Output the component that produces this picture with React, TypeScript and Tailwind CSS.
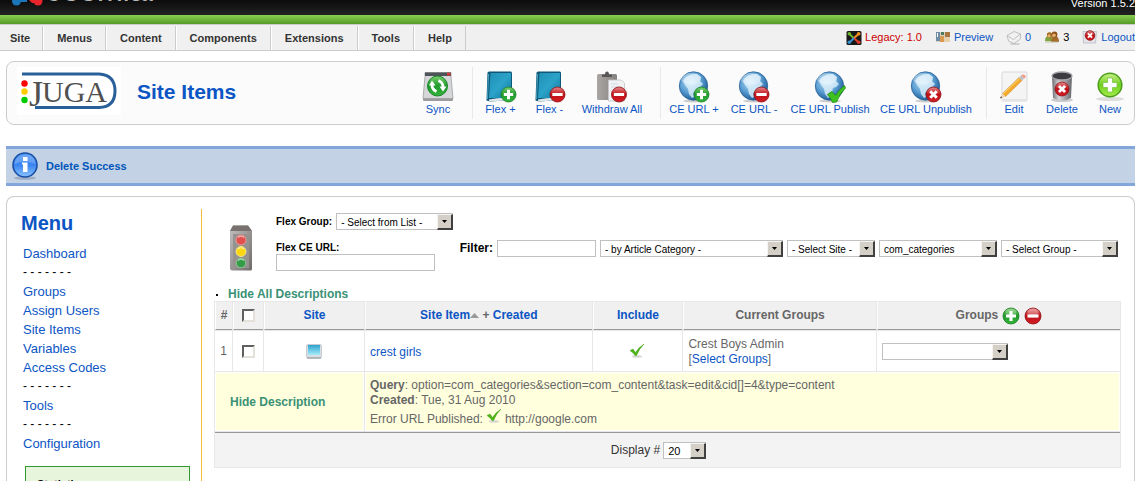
import React from "react";

type Badge = "plus" | "minus" | "check" | "cross";

function Gradients() {
  return (
    <svg className="absolute h-0 w-0" aria-hidden="true">
      <defs>
        <radialGradient id="globe" cx="0.4" cy="0.35" r="0.7">
          <stop offset="0" stopColor="#b5dcf2" />
          <stop offset="0.55" stopColor="#5b9fd2" />
          <stop offset="1" stopColor="#15508f" />
        </radialGradient>
        <linearGradient id="green" x1="0" y1="0" x2="0" y2="1">
          <stop offset="0" stopColor="#7ccf6c" />
          <stop offset="0.5" stopColor="#1f9a2b" />
          <stop offset="1" stopColor="#35b53c" />
        </linearGradient>
        <linearGradient id="red" x1="0" y1="0" x2="0" y2="1">
          <stop offset="0" stopColor="#e88a8a" />
          <stop offset="0.5" stopColor="#c01018" />
          <stop offset="1" stopColor="#d41e25" />
        </linearGradient>
        <linearGradient id="book" x1="0" y1="0" x2="1" y2="1">
          <stop offset="0" stopColor="#1f8fb5" />
          <stop offset="0.5" stopColor="#2ba3c9" />
          <stop offset="1" stopColor="#11749a" />
        </linearGradient>
        <linearGradient id="metal" x1="0" y1="0" x2="1" y2="0">
          <stop offset="0" stopColor="#6b6b70" />
          <stop offset="0.35" stopColor="#d8d8dc" />
          <stop offset="1" stopColor="#66666b" />
        </linearGradient>
        <linearGradient id="lime" x1="0" y1="0" x2="0" y2="1">
          <stop offset="0" stopColor="#c9f08a" />
          <stop offset="0.5" stopColor="#6fd01e" />
          <stop offset="1" stopColor="#a6ee4c" />
        </linearGradient>
        <linearGradient id="info" x1="0" y1="0" x2="0" y2="1">
          <stop offset="0" stopColor="#4b93f5" />
          <stop offset="0.5" stopColor="#3a84f0" />
          <stop offset="1" stopColor="#8cc4ff" />
        </linearGradient>
        <linearGradient id="grey" x1="0" y1="0" x2="1" y2="1">
          <stop offset="0" stopColor="#c4c2c1" />
          <stop offset="1" stopColor="#6f6b6a" />
        </linearGradient>
        <linearGradient id="clip" x1="0" y1="0" x2="1" y2="0">
          <stop offset="0" stopColor="#a9a6a4" />
          <stop offset="1" stopColor="#85817f" />
        </linearGradient>
        <linearGradient id="screen" x1="0" y1="0" x2="0" y2="1">
          <stop offset="0" stopColor="#2ea3cc" />
          <stop offset="1" stopColor="#a5ecfa" />
        </linearGradient>
      </defs>
    </svg>
  );
}

function BadgeShape({ kind, x, y, r }: { kind: Badge; x: number; y: number; r: number }) {
  if (kind === "check") {
    return (
      <path
        d="M13.500 23.500l4.500-3 3.500 4q3.500-6 9-10l1 2.500q-6 6-9 14l-4 .5q-2-5-5-8z"
        fill="#3fc21f"
        stroke="#1f8a10"
        strokeWidth="0.8"
      />
    );
  }
  return (
    <g>
      <circle cx={x} cy={y} r={r} fill={kind === "plus" ? "url(#green)" : "url(#red)"} stroke={kind === "plus" ? "#1a7d25" : "#8d0e12"} strokeWidth="0.8" />
      <g transform={`translate(${x} ${y}) scale(${r / 8})`} stroke="#fff" strokeWidth="3.200" fill="none">
        {kind === "plus" && <path d="M-5 0H5M0-5V5" />}
        {kind === "minus" && <path d="M-5.500 0H5.500" />}
        {kind === "cross" && <path d="M-3.500-3.500L3.500 3.500M3.500-3.500L-3.500 3.500" />}
      </g>
    </g>
  );
}

function GlobeIcon({ badge }: { badge: Badge }) {
  return (
    <svg className="size-8" viewBox="0 0 32 32" aria-hidden="true">
      <ellipse cx="16" cy="30" rx="11" ry="1.500" fill="#ccc" />
      <circle cx="15.500" cy="15" r="14.200" fill="url(#globe)" stroke="#2a6299" strokeWidth="0.8" />
      <path d="M7 7q5-4.500 12-4l4 3-1 4 3 3-3 3-3 1-1 4-3 1 1 4-2 1-3-4-1-5-3-4-2-4z" fill="#e6f5fd" opacity="0.75" />
      <ellipse cx="13" cy="8" rx="10" ry="6" fill="#fff" opacity="0.25" />
      <BadgeShape kind={badge} x={23.500} y={23.500} r={7.500} />
    </svg>
  );
}

function BookIcon({ badge }: { badge: Badge }) {
  return (
    <svg className="size-8" viewBox="0 0 32 32" aria-hidden="true">
      <path d="M2.500 1.500l1.500-1H26l1 1V29L5 30.500l-3.500-1z" fill="#0d5878" />
      <path d="M5.500 2H26v25H4z" fill="url(#book)" />
      <path d="M4 28.500q12-2.500 23-1.500v2L4 30.500z" fill="#dfe6e9" />
      <path d="M3.500 3L2.500 28" stroke="#4aa5c2" strokeWidth="1" />
      <BadgeShape kind={badge} x={23.500} y={23.500} r={7.500} />
    </svg>
  );
}

function SyncIcon() {
  return (
    <svg className="size-8" viewBox="0 0 32 32" aria-hidden="true">
      <rect x="1" y="26" width="30" height="4" rx="1" fill="#9b9b9d" />
      <path d="M3 1.500h26v4l2 22H1l2-22z" fill="#d5d6d8" stroke="#9c9ea0" strokeWidth="0.800" />
      <rect x="3" y="1.500" width="26" height="3.500" fill="#4d5357" />
      <rect x="25" y="1.800" width="3.500" height="2.700" fill="#d2363b" />
      <circle cx="15.500" cy="15" r="10" fill="url(#green)" stroke="#17852a" />
      <path d="M14.500 20.500q-4.500-2-4.500-6.500M16.500 9.500q4.500 2 4.500 6.500" stroke="#fff" strokeWidth="2.800" fill="none" />
      <path d="M7 14.500L10 9.500l3.500 5zM17.500 15.500h7l-3.500 5z" fill="#fff" />
    </svg>
  );
}

function WithdrawIcon() {
  return (
    <svg className="size-8" viewBox="0 0 32 32" aria-hidden="true">
      <rect x="1" y="3" width="20" height="26" rx="1.500" fill="url(#clip)" />
      <path d="M6 6V3.500h3q0-3 2-3t2 3h3V6z" fill="#595756" />
      <path d="M12.500 9H25l3.500 3v18h-16z" fill="#f1f2f4" stroke="#c4c4c6" strokeWidth="0.800" />
      <path d="M15 13h7M15 16h9" stroke="#d3d9e0" />
      <BadgeShape kind="minus" x={23} y={23.500} r={7.500} />
    </svg>
  );
}

function EditIcon() {
  return (
    <svg className="size-8" viewBox="0 0 32 32" aria-hidden="true">
      <rect x="4" y="1" width="25" height="29" rx="1" fill="#f4f4f4" stroke="#d9d9d9" />
      <path d="M4 28h25v2H4z" fill="#e4e4e4" />
      <path d="M4.500 22.500L21 6.500l3 3L7.500 25.500z" fill="#f5ab2c" stroke="#c57d14" strokeWidth="0.500" />
      <path d="M5.300 22.500L21.700 7.300" stroke="#ffd878" strokeWidth="1" />
      <path d="M2 27.500l2.500-5 3 3z" fill="#f0d7ab" />
      <path d="M2 27.500l1-2.200 1.200 1.200z" fill="#333" />
      <path d="M21 6.500L23 4.500l3 3-2 2z" fill="#b9c2c8" />
      <path d="M23 4.500q2-2 4-.3t-1 3.300z" fill="#ef9d8c" />
    </svg>
  );
}

function TrashIcon() {
  return (
    <svg className="size-8" viewBox="0 0 32 32" aria-hidden="true">
      <ellipse cx="16" cy="29" rx="11" ry="2" fill="#ccc" />
      <path d="M6 5l1 22q9 5 18 0l1-22z" fill="url(#metal)" />
      <ellipse cx="16" cy="5" rx="10" ry="4" fill="#3c3c40" stroke="#a2a2a6" strokeWidth="1.300" />
      <BadgeShape kind="cross" x={16} y={18} r={7} />
    </svg>
  );
}

function NewIcon() {
  return (
    <svg className="size-8" viewBox="0 0 32 32" aria-hidden="true">
      <ellipse cx="16" cy="28" rx="14" ry="2" fill="#ddd" />
      <circle cx="16" cy="14" r="11.800" fill="url(#lime)" stroke="#4e9e1e" strokeWidth="1.500" />
      <path d="M13.500 7h5v4.500H23v5h-4.500V21h-5v-4.500H9v-5h4.500z" fill="#fff" stroke="#79bf3c" strokeWidth="0.700" />
    </svg>
  );
}

function RoundIcon({ kind }: { kind: Badge }) {
  return (
    <svg className="size-[18px]" viewBox="0 0 18 18" aria-hidden="true">
      <BadgeShape kind={kind} x={9} y={9} r={8} />
      <ellipse cx="9" cy="5" rx="5.500" ry="3.200" fill="#fff" opacity="0.250" />
    </svg>
  );
}

function TickIcon() {
  return (
    <svg className="inline size-4" viewBox="0 0 16 16" aria-hidden="true">
      <ellipse cx="8" cy="13.500" rx="5" ry="1.200" fill="#d5d5d0" />
      <path d="M1 7.500L4 6l2.500 3.500Q10 4 15 1q-5 5-7.500 11.500H6Q4 9.500 1 7.500z" fill="#4fb616" stroke="#35900c" strokeWidth="0.400" />
    </svg>
  );
}

function JugaLogo() {
  return (
    <svg className="h-12 w-[104px]" viewBox="0 0 104 48" role="img" aria-label="JUGA">
      <rect width="104" height="48" fill="#fff" />
      <path d="M5 7H82Q98 8 98 24T82 40.500H18" fill="none" stroke="#2a6099" strokeWidth="3" />
      <circle cx="7.500" cy="16.500" r="3.200" fill="#f00" />
      <circle cx="7.500" cy="24.500" r="3.200" fill="#fc0" />
      <circle cx="7.500" cy="33" r="3.200" fill="#0c0" />
      <text x="12" y="39" fontSize="36" fill="#505050" fontFamily="'Liberation Serif', serif">
        J
        <tspan x="25" y="35" fontSize="30">
          UGA
        </tspan>
      </text>
    </svg>
  );
}

function TrafficLight() {
  return (
    <svg className="h-[46px] w-6 shrink-0" viewBox="0 0 24 46" aria-hidden="true">
      <path d="M4 .5h15L23 6v38q0 1.500-1.500 1.500h-19L1 44V6z" fill="url(#grey)" />
      <path d="M4 .5h15L23 6H1z" fill="#777270" />
      <path d="M4 9h16v34H4z" fill="#969290" />
      <circle cx="12" cy="15" r="5" fill="#e2504d" stroke="#f0a6a3" strokeWidth="0.800" />
      <circle cx="12" cy="26.500" r="5" fill="#fbd712" stroke="#fff09b" strokeWidth="0.800" />
      <circle cx="12" cy="38" r="4.700" fill="#349c46" stroke="#8fce98" strokeWidth="0.800" />
      <path d="M9 12.500q3-2.500 6 0M9 24q3-2.500 6 0M9 35.500q3-2.500 6 0" stroke="#fff" strokeWidth="1.200" opacity="0.600" fill="none" />
    </svg>
  );
}

function InfoIcon() {
  return (
    <svg className="h-7 w-[26px] shrink-0" viewBox="0 0 26 28" aria-hidden="true">
      <ellipse cx="13" cy="26" rx="11" ry="1.700" fill="#9caec6" />
      <circle cx="13" cy="13" r="12" fill="url(#info)" stroke="#194fa5" strokeWidth="1.600" />
      <path d="M2.500 12Q3 3 13 2.500T23.500 12Q13 7 2.500 12z" fill="#fff" opacity="0.200" />
      <path d="M11 5h4.500v4H11zM10 10.500h5.500V20h-4.500v-7.500h-1z" fill="#fff" />
    </svg>
  );
}

function LegacyIcon() {
  return (
    <svg className="size-4" viewBox="0 0 16 16" aria-hidden="true">
      <rect x="0.500" y="1" width="15" height="14" rx="1.500" fill="#181818" />
      <g fill="none" strokeWidth="2">
        <path d="M3.500 4L8 8.500" stroke="#6cb52d" />
        <path d="M12.500 4L8 8" stroke="#f39022" />
        <path d="M12.500 12.500L8 8" stroke="#e23b2e" />
        <path d="M3.500 12.500L8 8" stroke="#3590cf" />
      </g>
      <circle cx="3.300" cy="3.800" r="1.800" fill="#6cb52d" />
      <circle cx="12.700" cy="3.800" r="1.800" fill="#f39022" />
      <circle cx="12.700" cy="12.300" r="1.800" fill="#e23b2e" />
      <circle cx="3.300" cy="12.300" r="1.800" fill="#3590cf" />
    </svg>
  );
}

function PreviewIcon() {
  return (
    <svg className="size-4" viewBox="0 0 16 16" aria-hidden="true">
      <rect x="1" y="2" width="14" height="10" fill="#d6d2c4" />
      <path d="M1 2h4v9H1z" fill="#6f8ba5" />
      <path d="M6 2h3v3H6z" fill="#4f7a59" />
      <path d="M10 2h5v5h-5z" fill="#a8743f" />
      <path d="M5 6h4v6H5z" fill="#d99a50" />
      <path d="M10 8h4v4h-4z" fill="#ecd0a3" />
      <path d="M2.500 3v4" stroke="#fff" />
    </svg>
  );
}

function MailIcon() {
  return (
    <svg className="size-4" viewBox="0 0 16 16" aria-hidden="true">
      <ellipse cx="9" cy="14" rx="5" ry="1" fill="#ccc" />
      <path d="M1 5.500L8 1.500 14.500 4v5L8 13.500 2.500 11z" fill="#f1f1f1" stroke="#b3b3b3" strokeWidth="0.800" />
      <path d="M1 5.500l6.500 4 7-5.500" stroke="#b3b3b3" strokeWidth="0.800" fill="none" />
    </svg>
  );
}

function UsersIcon() {
  return (
    <svg className="size-4" viewBox="0 0 16 16" aria-hidden="true">
      <path d="M1 11q0-5 4-5t4 5z" fill="#7fa23b" />
      <path d="M7 12q0-6 4-6t4 6z" fill="#a26b2b" />
      <circle cx="5.500" cy="5" r="2.700" fill="#a2691f" />
      <circle cx="10.500" cy="4.500" r="2.900" fill="#8c4f14" />
      <circle cx="10" cy="5.300" r="1.800" fill="#e6b271" />
      <circle cx="5" cy="5.800" r="1.600" fill="#e6b271" />
      <path d="M1 12h13" stroke="#b8ba9c" />
    </svg>
  );
}

function LogoutIcon() {
  return (
    <svg className="size-4" viewBox="0 0 16 16" aria-hidden="true">
      <path d="M1 1.500h13.500L13.500 13h-12z" fill="#e2e4e8" stroke="#b9bcc4" strokeWidth="0.800" />
      <BadgeShape kind="cross" x={8} y={5.500} r={4.800} />
    </svg>
  );
}

function SiteIcon() {
  return (
    <svg className="inline h-[15px] w-4" viewBox="0 0 16 15" aria-hidden="true">
      <rect x="0.500" y="0.500" width="15" height="13.500" rx="1.500" fill="#d8dde2" stroke="#bcc3ca" strokeWidth="0.800" />
      <rect x="2" y="1" width="12" height="10" fill="url(#screen)" />
      <path d="M1 14h14" stroke="#8b9298" />
    </svg>
  );
}

function Dropdown({ label, options, className }: { label: string; options: string[]; className: string }) {
  return (
    <span className={`inline-grid h-[17px] ${className}`}>
      <select
        aria-label={label}
        className="col-start-1 row-start-1 h-full w-full appearance-none border border-[#c0c0c0] bg-white pl-1 pr-4 pt-[2px] leading-[13px] text-black outline-none"
      >
        {options.map((option) => (
          <option key={option}>{option}</option>
        ))}
      </select>
      <span className="pointer-events-none col-start-1 row-start-1 mt-px flex w-4 items-center justify-center justify-self-end border border-b-2 border-r-2 border-[#404040] border-l-[#f5f4f0] border-t-[#f5f4f0] bg-[#d4d0c8]">
        <svg className="h-[3px] w-[5px]" viewBox="0 0 5 3" aria-hidden="true">
          <path d="M0 0h5L2.500 3z" fill="#000" />
        </svg>
      </span>
    </span>
  );
}

function Checkbox({ label }: { label: string }) {
  return (
    <input
      type="checkbox"
      aria-label={label}
      className="inline-block size-[13px] appearance-none border-2 border-b-[#e3e1da] border-l-[#606060] border-r-[#e3e1da] border-t-[#606060] bg-white align-middle"
    />
  );
}

function Tool({ icon, label, className }: { icon: React.ReactNode; label: string; className: string }) {
  return (
    <button
      type="button"
      className={`flex flex-col items-center whitespace-nowrap pt-1 text-[11px] leading-[13px] text-[#0b55c4] ${className}`}
    >
      {icon}
      {label}
    </button>
  );
}

function ToolDivider() {
  return <span className="ml-[10px] mr-[3px] w-px bg-[#e9e9e9]" />;
}

const navItems = ["Menus", "Content", "Components", "Extensions", "Tools", "Help"];
const sideItems = [
  "Dashboard",
  "",
  "Groups",
  "Assign Users",
  "Site Items",
  "Variables",
  "Access Codes",
  "",
  "Tools",
  "",
  "Configuration",
];

const th = "border-b border-l border-b-[#999] border-l-white bg-[#f0f0f0] p-0 text-center font-bold";
const td = "border border-white bg-white p-0";

export default function App() {
  return (
    <div className="flex h-screen flex-col overflow-hidden bg-white font-['Liberation_Sans',Arial,sans-serif] text-[12px] leading-[15px] text-black">
      <Gradients />
      <header className="flex h-[15px] shrink-0 items-end justify-between overflow-hidden bg-linear-to-b from-[#0c0c0c] to-[#222] pl-3">
        <div className="flex items-end gap-1 pb-[9px]">
          <svg className="h-8 w-[31px]" viewBox="0 0 31 32" aria-hidden="true">
            <g fill="none" strokeWidth="5">
              <path d="M4 28L20 12" stroke="#1b75bb" />
              <path d="M26 28L10 12" stroke="#e8252a" />
            </g>
            <circle cx="4.500" cy="27" r="4.500" fill="#1b75bb" />
            <path d="M4 24h11v4H8z" fill="#1b75bb" />
            <circle cx="26" cy="27" r="4.500" fill="#e8252a" />
            <path d="M16 25h12v4h-8z" fill="#e8252a" />
          </svg>
          <span className="text-[31px] leading-[31px] text-[#bbb]">Joomla!</span>
        </div>
        <span className="pb-[5px] text-[11px] leading-[14px] text-white">Version 1.5.2</span>
      </header>
      <div className="h-[9px] shrink-0 bg-linear-to-b from-[#88cf50] to-[#559a26]" />

      <nav className="flex h-[27px] shrink-0 items-stretch justify-between border-y border-[#ccc] bg-[#f0f0f0]">
        <div className="flex pt-px text-[11px] font-bold text-[#333]">
          <a href="#site" className="flex items-center border-r border-[#ccc] pl-[10px] pr-3">
            Site
          </a>
          {navItems.map((item) => (
            <a key={item} href={`#${item}`} className="flex items-center border-l border-r border-l-white border-r-[#ccc] px-[13px]">
              {item}
            </a>
          ))}
        </div>
        <div className="flex items-center gap-[13px] text-[11px] text-[#0b55c4]">
          <a href="#legacy" className="flex items-center gap-[3px] text-[#c00]">
            <LegacyIcon />
            Legacy: 1.0
          </a>
          <a href="#preview" className="flex items-center gap-[3px]">
            <PreviewIcon />
            Preview
          </a>
          <a href="#messages" className="flex items-center gap-[3px]">
            <MailIcon />0
          </a>
          <span className="flex items-center gap-[3px] text-black">
            <UsersIcon />3
          </span>
          <a href="#logout" className="flex items-center gap-[3px]">
            <LogoutIcon />
            Logout
          </a>
        </div>
      </nav>

      <section className="ml-[6px] mt-[10px] flex h-16 shrink-0 items-stretch rounded-lg border border-[#ccc] bg-[#fbfbfb] py-[5px] pl-[10px]">
        <JugaLogo />
        <h1 className="ml-4 self-center pb-[3px] text-[21px] font-bold leading-6 text-[#0b55c4]">Site Items</h1>
        <div className="ml-auto flex">
          <Tool icon={<SyncIcon />} label="Sync" className="w-12" />
          <ToolDivider />
          <Tool icon={<BookIcon badge="plus" />} label="Flex +" className="w-[49px]" />
          <Tool icon={<BookIcon badge="minus" />} label="Flex -" className="w-[49px]" />
          <Tool icon={<WithdrawIcon />} label="Withdraw All" className="w-[76px]" />
          <ToolDivider />
          <Tool icon={<GlobeIcon badge="plus" />} label="CE URL +" className="w-[60px]" />
          <Tool icon={<GlobeIcon badge="minus" />} label="CE URL -" className="w-[60px]" />
          <Tool icon={<GlobeIcon badge="check" />} label="CE URL Publish" className="w-[92px]" />
          <Tool icon={<GlobeIcon badge="cross" />} label="CE URL Unpublish" className="w-[100px]" />
          <ToolDivider />
          <Tool icon={<EditIcon />} label="Edit" className="w-12" />
          <Tool icon={<TrashIcon />} label="Delete" className="w-12" />
          <Tool icon={<NewIcon />} label="New" className="w-12" />
        </div>
      </section>

      <div
        role="status"
        className="ml-[6px] mt-[21px] flex h-10 shrink-0 items-center gap-2 border-y-[3px] border-[#84a7db] bg-[#c3d2e5] pl-[6px] text-[11px] font-bold text-[#0055bb]"
      >
        <InfoIcon />
        Delete Success
      </div>

      <section className="ml-[6px] mt-[10px] flex min-h-0 flex-1 rounded-t-lg border border-b-0 border-[#ccc] pt-3">
        <aside className="w-[195px] shrink-0 overflow-hidden border-r border-r-[#f5bd3a] text-[13px]">
          <h2 className="h-[35px] pl-[14px] pt-[2px] text-[20px] font-bold leading-6 text-[#0b55c4]">Menu</h2>
          <ul className="pl-4 leading-[19px] text-[#0b55c4]">
            {sideItems.map((item, index) => (
              <li key={index}>
                {item ? <a href={`#${item}`}>{item}</a> : <span className="block h-[19px] text-[12px] text-black">- - - - - - -</span>}
              </li>
            ))}
          </ul>
          <div className="ml-[18px] mr-[11px] mt-[13px] h-[120px] border border-[#2f9a2f] bg-[#e8f5dd] pl-[11px] pt-[10px] text-[11px] font-bold">
            Statistics
          </div>
        </aside>

        <main className="min-w-0 flex-1 pl-3 pr-[13px]">
          <form className="flex h-[78px] items-center pl-[15px] pr-[3px] text-[10px]" onSubmit={(e) => e.preventDefault()}>
            <TrafficLight />
            <div className="ml-[23px] flex flex-col self-start pt-1">
              <div className="flex items-center gap-1">
                <span className="whitespace-nowrap font-bold">Flex Group:</span>
                <Dropdown label="Flex Group" options={["- Select from List -"]} className="w-[117px]" />
              </div>
              <label htmlFor="ce-url" className="mt-3 font-bold leading-3">
                Flex CE URL:
              </label>
              <input id="ce-url" type="text" className="h-[17px] w-[159px] border border-[#c0c0c0] bg-white px-1 outline-none" />
            </div>
            <div className="ml-auto flex items-center gap-1">
              <label htmlFor="filter" className="text-[12px] font-bold">
                Filter:
              </label>
              <input id="filter" type="text" className="h-[17px] w-[99px] border border-[#c0c0c0] bg-white px-1 outline-none" />
              <Dropdown label="Article category" options={["- by Article Category -"]} className="w-[183px]" />
              <Dropdown label="Site" options={["- Select Site -"]} className="w-[88px]" />
              <Dropdown label="Component" options={["com_categories"]} className="w-[118px]" />
              <Dropdown label="Group" options={["- Select Group -"]} className="w-[117px]" />
            </div>
          </form>

          <div className="flex h-[14px] items-center gap-[10px] pl-[2px] leading-[14px]">
            <span className="mt-[2px] size-[2px] bg-black" />
            <a href="#descriptions" className="font-bold text-[#3a9176]">
              Hide All Descriptions
            </a>
          </div>

          <table className="w-full table-fixed border-separate border-spacing-px bg-[#e7e7e7] text-[#666]">
            <colgroup>
              <col className="w-[17px]" />
              <col className="w-[30px]" />
              <col className="w-[100px]" />
              <col className="w-[25.2%]" />
              <col className="w-[10%]" />
              <col className="w-[21.4%]" />
              <col />
            </colgroup>
            <thead>
              <tr className="h-7">
                <th className={th}>#</th>
                <th className={th}>
                  <Checkbox label="Select all" />
                </th>
                <th className={th}>
                  <a href="#sort-site" className="text-[#0b55c4]">Site</a>
                </th>
                <th className={th}>
                  <a href="#sort-item" className="text-[#0b55c4]">Site Item</a>
                  <svg className="inline h-[5px] w-[9px]" viewBox="0 0 9 5" aria-hidden="true">
                    <path d="M0 5L4.500 0 9 5z" fill="#999" />
                  </svg>{" "}
                  + <a href="#sort-created" className="text-[#0b55c4]">Created</a>
                </th>
                <th className={th}>
                  <a href="#sort-include" className="text-[#0b55c4]">Include</a>
                </th>
                <th className={th}>Current Groups</th>
                <th className={th}>
                  <span className="flex items-center justify-center gap-1">
                    Groups
                    <button type="button" aria-label="Add groups">
                      <RoundIcon kind="plus" />
                    </button>
                    <button type="button" aria-label="Remove groups">
                      <RoundIcon kind="minus" />
                    </button>
                  </span>
                </th>
              </tr>
            </thead>
            <tbody>
              <tr className="h-10">
                <td className={`${td} text-center`}>1</td>
                <td className={`${td} text-center`}>
                  <Checkbox label="Select crest girls" />
                </td>
                <td className={`${td} text-center`}>
                  <SiteIcon />
                </td>
                <td className={td}>
                  <div className="pl-1 pt-[2px]">
                    <a href="#crest-girls" className="text-[#0b55c4]">crest girls</a>
                  </div>
                </td>
                <td className={`${td} text-center`}>
                  <TickIcon />
                </td>
                <td className={td}>
                  <div className="pl-1 pt-[2px]">
                    Crest Boys Admin
                    <br />[<a href="#select-groups" className="text-[#0b55c4]">Select Groups</a>]
                  </div>
                </td>
                <td className={td}>
                  <div className="flex pl-1 text-[10px]">
                    <Dropdown label="Groups" options={[""]} className="w-[126px]" />
                  </div>
                </td>
              </tr>
              <tr className="h-[59px]">
                <td colSpan={3} className="border border-white bg-[#ffffdd] p-0">
                  <div className="pl-[14px] pt-[2px]">
                    <a href="#description" className="font-bold text-[#3a9176]">Hide Description</a>
                  </div>
                </td>
                <td colSpan={4} className="border border-white bg-[#ffffdd] p-0">
                  <div className="pl-1 pt-[2px]">
                    <b>Query</b>: option=com_categories&amp;section=com_content&amp;task=edit&amp;cid[]=4&amp;type=content
                    <br />
                    <b>Created</b>: Tue, 31 Aug 2010
                    <div className="flex items-end gap-[3px]">
                      <span>Error URL Published:</span>
                      <span className="pb-[3px]">
                        <TickIcon />
                      </span>
                      <span>http://google.com</span>
                    </div>
                  </div>
                </td>
              </tr>
            </tbody>
            <tfoot>
              <tr className="h-[35px]">
                <td colSpan={7} className="border-t border-[#999] bg-[#f3f3f3] p-0 text-[#333]">
                  <div className="flex items-center justify-center gap-[3px] pr-[18px]">
                    Display #
                    <span className="flex text-[11px]">
                      <Dropdown label="Rows to display" options={["20"]} className="w-[43px]" />
                    </span>
                  </div>
                </td>
              </tr>
            </tfoot>
          </table>
        </main>
      </section>
    </div>
  );
}
